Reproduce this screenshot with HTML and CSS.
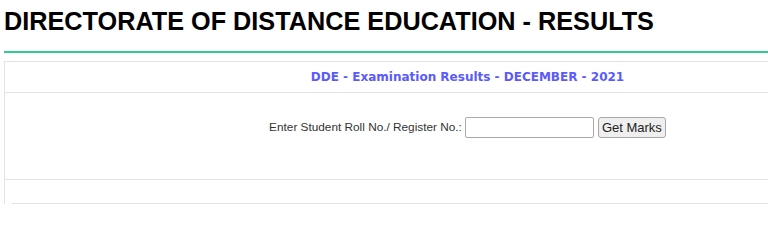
FILE: index.html
```html
<!DOCTYPE html>
<html>
<head>
<meta charset="utf-8">
<title>DDE Results</title>
<link rel="stylesheet" href="styles.css">
</head>
<body>
<div class="page">
  <h1 class="title">DIRECTORATE OF DISTANCE EDUCATION - RESULTS</h1>
  <div class="panel">
    <div class="panel-head">DDE - Examination Results - DECEMBER - 2021</div>
    <div class="panel-form">
      <label class="form-label" for="roll">Enter Student Roll No./ Register No.:</label>
      <input class="form-input" id="roll" type="text">
      <button class="form-button" type="button">Get Marks</button>
    </div>
    <div class="panel-foot"><div class="foot-inner"></div></div>
  </div>
</div>
</body>
</html>
```
FILE: styles.css
```css
html, body {
  margin: 0;
  padding: 0;
  height: 204px;
  overflow: hidden;
  background: #ffffff;
}

.page {
  padding: 7px 0 0 4px;
  width: 1000px;
}

.title {
  margin: 0 0 8px 0;
  padding: 0 0 16px 0;
  font-family: "Liberation Sans", Arial, sans-serif;
  font-weight: bold;
  font-size: 25.25px;
  line-height: 28px;
  color: #000000;
  border-bottom: 2px solid #2ccf8d;
}

.panel {
  width: 925px;
  border: 1px solid #e3e3e3;
}

.panel-head {
  height: 30px;
  line-height: 30px;
  text-align: center;
  font-family: "DejaVu Sans", Verdana, sans-serif;
  font-weight: bold;
  font-size: 12px;
  color: #5a5aff;
  border-bottom: 1px solid #e3e3e3;
}

.panel-form {
  height: 62px;
  padding-top: 24px;
  display: flex;
  justify-content: center;
  align-items: flex-start;
  border-bottom: 1px solid #e3e3e3;
}

.form-label {
  font-family: "Liberation Sans", Arial, sans-serif;
  font-size: 11.8px;
  line-height: 21px;
  color: #333333;
  margin-right: 3px;
}

.form-input {
  box-sizing: border-box;
  width: 129px;
  height: 21px;
  margin: 0 4px 0 0;
  padding: 1px 3px;
  border: 1px solid #a9a9a9;
  border-radius: 2px;
  background: #ffffff;
}

.form-button {
  box-sizing: border-box;
  width: 68px;
  height: 21px;
  margin: 0;
  padding: 0;
  white-space: nowrap;
  font-family: "Liberation Sans", Arial, sans-serif;
  font-size: 13px;
  line-height: 19px;
  color: #222222;
  background: #efefef;
  border: 1px solid #a9a9a9;
  border-radius: 3px;
}

.panel-foot {
  padding: 23px 7px 10px 7px;
}

.foot-inner {
  height: 10px;
  border-top: 1px solid #e3e3e3;
}
```
